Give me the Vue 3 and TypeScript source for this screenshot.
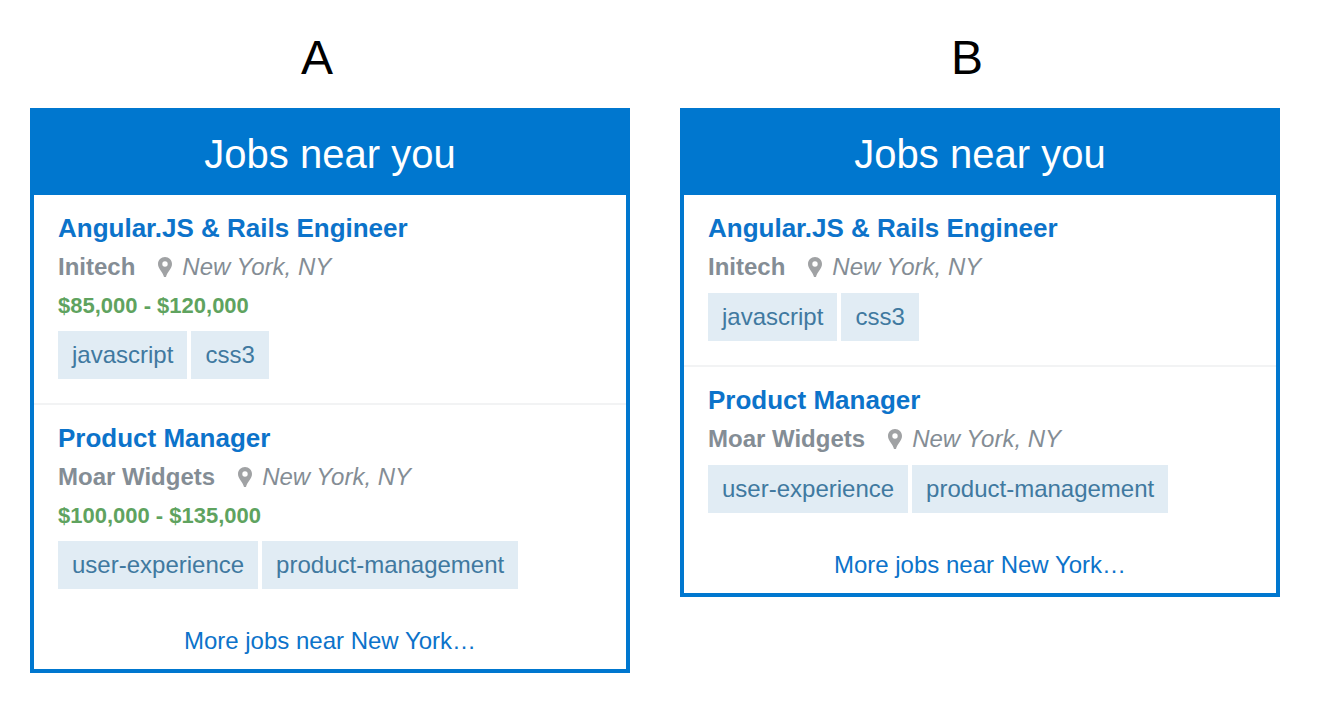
<script setup lang="ts">
interface Job {
  title: string
  company: string
  place: string
  salary: string
  tags: string[]
}
interface Variant {
  name: string
  showSalary: boolean
}

const variants: Variant[] = [
  { name: 'A', showSalary: true },
  { name: 'B', showSalary: false },
]
const jobs: Job[] = [
  {
    title: 'Angular.JS & Rails Engineer',
    company: 'Initech',
    place: 'New York, NY',
    salary: '$85,000 - $120,000',
    tags: ['javascript', 'css3'],
  },
  {
    title: 'Product Manager',
    company: 'Moar Widgets',
    place: 'New York, NY',
    salary: '$100,000 - $135,000',
    tags: ['user-experience', 'product-management'],
  },
]
</script>

<template>
  <main class="page">
    <section v-for="variant in variants" :key="variant.name" class="variant">
      <h1 class="label">{{ variant.name }}</h1>
      <div class="card">
        <h2 class="heading">Jobs near you</h2>
        <ul class="jobs">
          <li v-for="job in jobs" :key="job.title" class="job">
            <a class="title" href="#">{{ job.title }}</a>
            <div class="meta">
              <span class="company">{{ job.company }}</span>
              <svg class="pin" viewBox="0 0 14 20" aria-hidden="true">
                <path
                  fill-rule="evenodd"
                  d="M7 0C3.1 0 0 3 0 7C0 11.500 4.600 14.500 6 20H8C9.400 14.500 14 11.500 14 7C14 3 10.900 0 7 0ZM7 4.300A2.700 2.700 0 1 1 7 9.700A2.700 2.700 0 1 1 7 4.300Z"
                />
              </svg>
              <span class="place">{{ job.place }}</span>
            </div>
            <div v-if="variant.showSalary" class="salary">{{ job.salary }}</div>
            <div class="tags">
              <a v-for="tag in job.tags" :key="tag" class="tag" href="#">{{ tag }}</a>
            </div>
          </li>
        </ul>
        <a class="more" href="#">More jobs near New York…</a>
      </div>
    </section>
  </main>
</template>

<style scoped>
.page {
  display: grid;
  grid-template-columns: 1fr 1fr;
  align-items: start;
  gap: 50px;
  padding: 30px 52px 30px 30px;
  font-family: "Liberation Sans", Arial, sans-serif;
  font-size: 24px;
}
.label {
  margin: 0 26px 22px 0;
  font-size: 48px;
  line-height: 56px;
  font-weight: 400;
  text-align: center;
  color: #000;
}
.card {
  border: 4px solid #0077cf;
  background: #fff;
}
.heading {
  margin: 0;
  padding: 18px 0 17px;
  background: #0077cf;
  color: #fff;
  font-size: 40px;
  line-height: 48px;
  font-weight: 400;
  text-align: center;
}
.jobs {
  margin: 0;
  padding: 0;
  list-style: none;
}
.job {
  padding: 14px 24px 24px;
}
.job + .job {
  border-top: 2px solid #f2f3f4;
}
.title {
  display: block;
  color: #0c73ca;
  font-size: 26px;
  line-height: 38px;
  font-weight: 700;
  text-decoration: none;
}
.meta {
  display: flex;
  align-items: center;
  line-height: 40px;
  color: #848d95;
}
.company {
  font-weight: 700;
}
.pin {
  width: 14px;
  height: 20px;
  margin: 0 10px 0 23px;
  fill: #a0a2a4;
}
.place {
  font-style: italic;
}
.salary {
  font-size: 22px;
  line-height: 38px;
  font-weight: 700;
  color: #5fa35f;
}
.tags {
  display: flex;
  gap: 4px;
  margin-top: 6px;
}
.tag {
  padding: 0 14px;
  background: #e1ecf4;
  color: #4079a0;
  line-height: 48px;
  text-decoration: none;
}
.more {
  display: block;
  padding: 9px 0;
  color: #0c73ca;
  line-height: 38px;
  text-align: center;
  text-decoration: none;
}
</style>
